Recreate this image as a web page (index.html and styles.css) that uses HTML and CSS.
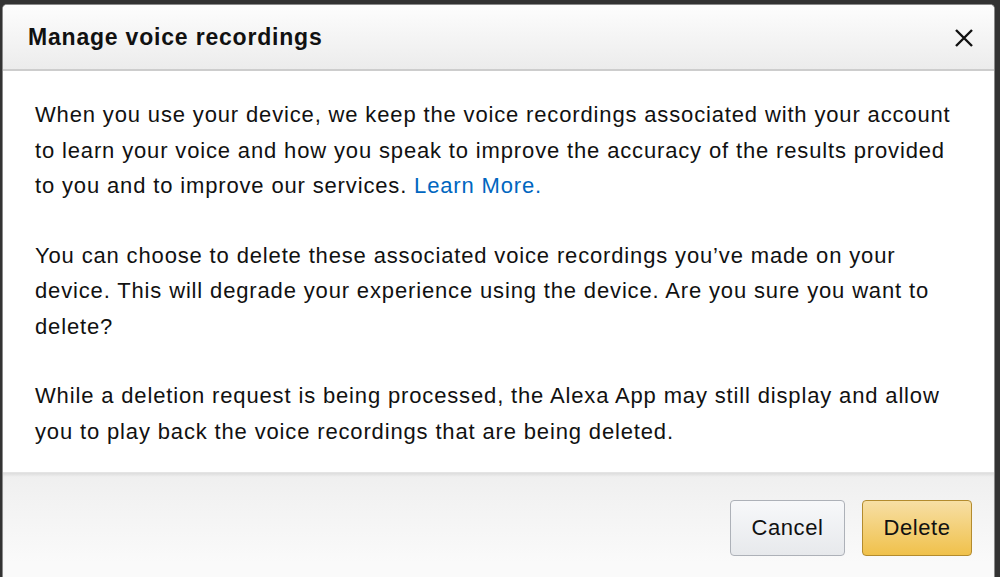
FILE: index.html
```html
<!DOCTYPE html>
<html lang="en">
<head>
    <meta charset="UTF-8">
    <title>Manage voice recordings</title>
    <link rel="stylesheet" href="styles.css">
</head>
<body>

<!-- modal for deleting voice recordings -->
<div class="dialog">
    <div class="dialogHeader">
        <h2 class="dialogTitle">Manage voice recordings</h2>
        <button class="closeButton" aria-label="Close">
            <svg width="20" height="20" viewBox="0 0 20 20">
                <path d="M2 2 L18 18 M18 2 L2 18" stroke="#111" stroke-width="2.4" fill="none"/>
            </svg>
        </button>
    </div>

    <div class="dialogBody">
        <p>When you use your device, we keep the voice recordings associated with your account to learn your voice and how you speak to improve the accuracy of the results provided to you and to improve our services. <a href="#">Learn More.</a></p>
        <p>You can choose to delete these associated voice recordings you&rsquo;ve made on your device. This will degrade your experience using the device. Are you sure you want to delete?</p>
        <p>While a deletion request is being processed, the Alexa App may still display and allow you to play back the voice recordings that are being deleted.</p>
    </div>

    <div class="dialogFooter">
        <button class="btn btnCancel">Cancel</button>
        <button class="btn btnDelete">Delete</button>
    </div>
</div>

</body>
</html>
```

FILE: styles.css
```css
html, body {
    margin: 0;
    height: 100%;
    overflow: hidden;
}

body {
    background: #333;
    padding: 4px 5px 0 2px;
    font-family: "Liberation Sans", Arial, sans-serif;
    color: #111;
}

.dialog {
    background: #fff;
    border: 1px solid #8a8a8a;
    border-bottom: 0;
    border-radius: 5px 5px 0 0;
    height: 640px;
    display: flex;
    flex-direction: column;
    overflow: hidden;
}

.dialogHeader {
    height: 64px;
    display: flex;
    align-items: center;
    justify-content: space-between;
    padding: 0 20px 0 25px;
    background: linear-gradient(#fdfdfd, #ececec);
    border-bottom: 2px solid #cdcdcd;
    flex-shrink: 0;
}

.dialogTitle {
    margin: 0;
    font-size: 23px;
    font-weight: bold;
    letter-spacing: 0.8px;
    color: #111;
}

.closeButton {
    background: transparent;
    border: 0;
    padding: 0;
    cursor: pointer;
    display: flex;
    margin-top: 2px;
}

.dialogBody {
    padding: 26px 30px 23px 32px;
    flex-shrink: 0;
}

.dialogBody p {
    margin: 0 0 34px 0;
    font-size: 22px;
    letter-spacing: 0.85px;
    line-height: 35.5px;
}

.dialogBody p:last-child {
    margin-bottom: 0;
}

.dialogBody a {
    color: #0066c0;
    text-decoration: none;
}

.dialogFooter {
    flex: 1;
    display: flex;
    justify-content: flex-end;
    align-items: flex-start;
    gap: 17px;
    padding: 27px 22px 0 0;
    background: linear-gradient(#efefef, #fafafa 90px);
    box-shadow: inset 0 3px 3px -1px rgba(0, 0, 0, 0.08);
    border-top: 1px solid #e4e4e4;
}

.btn {
    height: 56px;
    border-radius: 4px;
    font-family: "Liberation Sans", Arial, sans-serif;
    font-size: 22px;
    letter-spacing: 0.6px;
    color: #111;
    cursor: pointer;
}

.btnCancel {
    width: 115px;
    background: linear-gradient(#f7f8fa, #e7e9ec);
    border: 1px solid #adb1b8;
}

.btnDelete {
    width: 110px;
    background: linear-gradient(#f7dfa5, #f0c14b);
    border: 1px solid #b38b2e;
}
```
